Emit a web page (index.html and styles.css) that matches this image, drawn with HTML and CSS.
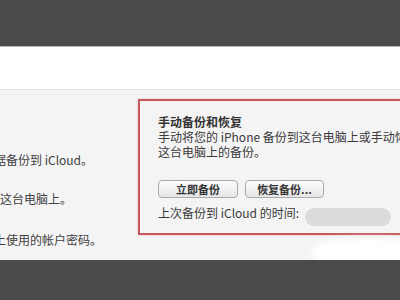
FILE: index.html
```html
<!DOCTYPE html>
<html lang="zh-CN">
<head>
    <meta charset="UTF-8">
    <title>备份</title>
    <link rel="stylesheet" href="styles.css">
</head>
<body>
    <div class="top-bar"></div>
    <div class="blank"></div>
    <div class="panel">
        <div class="options">
            <p class="opt">据备份到 iCloud。</p>
            <p class="opt opt-shift">这台电脑上。</p>
            <p class="opt">上使用的帐户密码。</p>
        </div>
        <div class="backup-box">
            <h3>手动备份和恢复</h3>
            <p>手动将您的 iPhone 备份到这台电脑上或手动恢复</p>
            <p>这台电脑上的备份。</p>
            <div class="buttons">
                <button class="btn btn-now">立即备份</button>
                <button class="btn btn-restore">恢复备份...</button>
            </div>
            <p class="last">上次备份到 iCloud 的时间:<span class="blur"></span></p>
        </div>
        <div class="smudge"></div>
    </div>
    <div class="bottom-bar"></div>
</body>
</html>
```

FILE: styles.css
```css
body {
    margin: 0;
    width: 400px;
    height: 300px;
    overflow: hidden;
    font-family: "Noto Sans CJK SC", "DejaVu Sans", sans-serif;
    font-size: 12px;
    color: #3a3a3a;
    background-color: #4a4a4a;
}
.top-bar {
    height: 46px;
    background-color: #4a4a4a;
    border-bottom: 1px solid #b8b8b8;
}
.blank {
    height: 42px;
    background-color: #fff;
}
.panel {
    position: relative;
    height: 170px;
    display: flex;
    background-color: #f4f4f5;
    border-top: 1px solid #e2e2e4;
    overflow: hidden;
}
.options {
    width: 144px;
    flex-shrink: 0;
    margin-left: -6px;
    padding-top: 62px;
    white-space: nowrap;
}
.opt {
    margin: 0 0 24px;
    line-height: 15px;
    color: #404040;
}
.opt-shift {
    padding-left: 6px;
    margin-bottom: 26px;
}
.backup-box {
    box-sizing: border-box;
    margin-top: 9px;
    height: 136px;
    flex: 1;
    margin-right: -20px;
    padding: 13px 0 0 18px;
    border: 2px solid #c45a5f;
    box-shadow: 0 0 2px #f0b8bb;
    white-space: nowrap;
}
.backup-box h3 {
    margin: 0;
    font-size: 12px;
    line-height: 15px;
    font-weight: bold;
    color: #333;
}
.backup-box p {
    margin: 0;
    line-height: 15px;
}
.buttons {
    display: flex;
    gap: 7px;
    margin-top: 21px;
}
.btn {
    height: 18px;
    padding: 0;
    font-family: inherit;
    font-size: 11px;
    font-weight: bold;
    color: #333;
    border: 1px solid #a9a9a9;
    border-radius: 4px;
    background: linear-gradient(#fdfdfd, #e6e6e6);
}
.btn-now {
    width: 80px;
}
.btn-restore {
    width: 79px;
}
.backup-box .last {
    margin-top: 7px;
    display: flex;
    align-items: flex-start;
}
.blur {
    display: inline-block;
    width: 86px;
    height: 18px;
    margin-left: 6px;
    margin-top: 3px;
    border-radius: 9px;
    background-color: #dcdcdc;
}
.smudge {
    position: absolute;
    right: -30px;
    bottom: -6px;
    width: 120px;
    height: 28px;
    border-radius: 50%;
    background-color: #fff;
    filter: blur(3px);
}
.bottom-bar {
    height: 39px;
    background-color: #4a4a4a;
}
```
